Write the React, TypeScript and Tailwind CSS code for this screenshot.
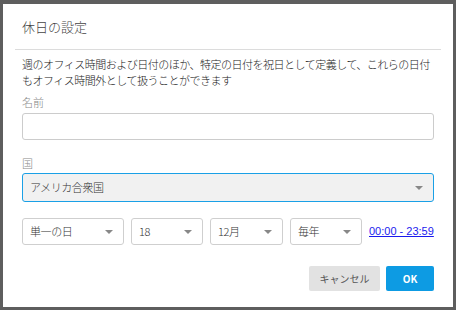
import React from "react";

const font = { fontFamily: '"Noto Sans CJK JP", "Noto Sans", sans-serif' };

function Caret() {
  return (
    <svg width="8" height="4" viewBox="0 0 8 4" className="shrink-0">
      <path d="M0 0h8L4 4z" fill="#888888" />
    </svg>
  );
}

function SmallSelect({ label, width }: { label: string; width: string }) {
  return (
    <div
      className={`${width} h-[27px] flex items-center justify-between border border-[#cfcfcf] rounded-[3px] bg-white pl-[7px] pr-[10px] text-[11px] tracking-[-0.4px] font-light text-[#333]`}
    >
      <span>{label}</span>
      <Caret />
    </div>
  );
}

export default function App() {
  return (
    <div className="w-[456px] h-[310px] bg-[#5e5e5e] pl-[3px] pt-[4px] overflow-hidden" style={font}>
      <div className="w-[450px] h-[303px] bg-white flex flex-col">
        <div className="h-[45px] flex items-center px-[19px] pt-[1px] text-[13px] font-light text-[#444]">
          休日の設定
        </div>
        <div className="mx-[12px] h-px bg-[#dcdcdc]" />

        <div className="px-[19px]">
          <p className="mt-[6px] text-[11px] tracking-[-0.5px] leading-[16px] font-light text-[#222]">
            週のオフィス時間および日付のほか、特定の日付を祝日として定義して、これらの日付もオフィス時間外として扱うことができます
          </p>

          <div className="mt-[6px] text-[11px] leading-[16px] font-light text-[#888]">名前</div>
          <div className="mt-[3px] h-[27px] border border-[#cccccc] rounded-[3px]" />

          <div className="mt-[15px] text-[11px] leading-[16px] font-light text-[#888]">国</div>
          <div className="mt-[2px] h-[29px] flex items-center justify-between bg-[#f1f1f1] border border-[#1aa0e6] rounded-[3px] pl-[7px] pr-[10px] text-[11px] tracking-[-0.4px] font-light text-[#333]">
            <span>アメリカ合衆国</span>
            <Caret />
          </div>

          <div className="mt-[16px] flex items-center gap-[7px]">
            <SmallSelect label="単一の日" width="w-[102px]" />
            <SmallSelect label="18" width="w-[72px]" />
            <SmallSelect label="12月" width="w-[73px]" />
            <SmallSelect label="毎年" width="w-[72px]" />
            <a
              className="whitespace-nowrap text-[11px] text-[#1a1aee] underline"
              style={{ fontFamily: '"Liberation Sans", sans-serif' }}
            >
              00:00 - 23:59
            </a>
          </div>

          <div className="mt-[21px] flex justify-end gap-[6px]">
            <button className="w-[71px] h-[25px] bg-[#e2e2e2] rounded-[2px] text-[10px] text-[#555]">
              キャンセル
            </button>
            <button className="w-[48px] h-[25px] bg-[#0d9be3] rounded-[2px] text-[10px] font-bold text-white">
              OK
            </button>
          </div>
        </div>
      </div>
    </div>
  );
}
